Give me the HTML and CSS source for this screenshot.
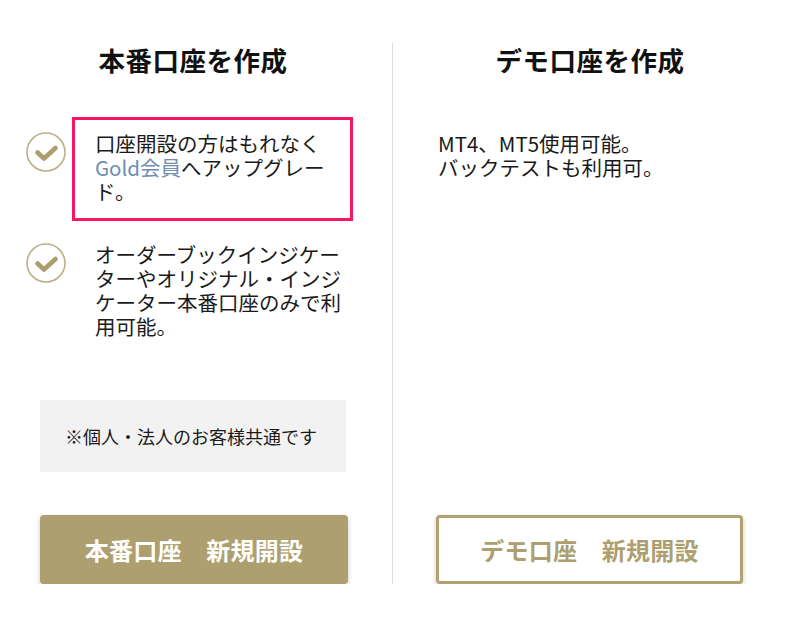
FILE: index.html
```html
<!DOCTYPE html>
<html lang="ja">
<head>
<meta charset="utf-8">
<title>口座を作成</title>
<link rel="stylesheet" href="styles.css">
</head>
<body>
<div class="wrap">
  <section class="col col-left">
    <h2 class="title">本番口座を作成</h2>
    <ul class="items">
      <li class="item">
        <svg class="check" viewBox="0 0 40 40" width="40" height="40"><circle cx="20" cy="20" r="19" fill="none" stroke="#bcae86" stroke-width="1.6"/><path d="M11.5 20.5 L18 26.5 L29.5 16" fill="none" stroke="#ab9d6c" stroke-width="4.6" stroke-linecap="round" stroke-linejoin="round"/></svg>
        <div class="box box-hl"><p class="txt">口座開設の方はもれなく<span class="gold">Gold会員</span>へアップグレード。</p></div>
      </li>
      <li class="item item2">
        <svg class="check" viewBox="0 0 40 40" width="40" height="40"><circle cx="20" cy="20" r="19" fill="none" stroke="#bcae86" stroke-width="1.6"/><path d="M11.5 20.5 L18 26.5 L29.5 16" fill="none" stroke="#ab9d6c" stroke-width="4.6" stroke-linecap="round" stroke-linejoin="round"/></svg>
        <div class="box"><p class="txt">オーダーブックインジケーターやオリジナル・インジケーター本番口座のみで利用可能。</p></div>
      </li>
    </ul>
    <div class="note">※個人・法人のお客様共通です</div>
    <a class="btn btn-fill" href="#">本番口座　新規開設</a>
  </section>
  <section class="col col-right">
    <h2 class="title">デモ口座を作成</h2>
    <p class="demo-txt">MT4、MT5使用可能。<br>バックテストも利用可。</p>
    <a class="btn btn-line" href="#">デモ口座　新規開設</a>
  </section>
</div>
</body>
</html>
```

FILE: styles.css
```css
* { box-sizing: border-box; }
html, body { margin: 0; padding: 0; background: #fff; }
body {
  font-family: "Noto Sans CJK JP", "Noto Sans", sans-serif;
  color: #1a1a1a;
}
.wrap {
  display: flex;
  padding-top: 43px;
  width: 785px;
}
.col {
  display: flex;
  flex-direction: column;
  width: 393px;
}
.col-left {
  padding: 0 46px 0 40px;
  border-right: 1px solid #dcdcdc;
}
.col-right {
  width: 392px;
  padding: 0 41px 0 43px;
}
.title {
  margin: 0 0 40px;
  font-size: 26.5px;
  line-height: 34px;
  font-weight: 700;
  text-align: center;
  color: #111;
  letter-spacing: 0.5px;
}
.items {
  list-style: none;
  margin: 0 -1px 0 -14px;
  padding: 0;
}
.item {
  display: flex;
  align-items: flex-start;
  gap: 6px;
}
.item2 { margin-top: 7px; }
.check {
  flex: none;
  margin-top: 15px;
  display: block;
}
.box {
  flex: 1;
  border: 3px solid transparent;
  padding: 11px 0 15px 20px;
}
.box-hl { border-color: #fa1560; }
.txt {
  margin: 0;
  width: 255px;
  font-size: 20.5px;
  line-height: 24px;
  color: #1a1a1a;
}
.gold { color: #6f8db0; }
.note {
  margin-top: 44px;
  height: 72px;
  background: #f2f2f2;
  display: flex;
  align-items: center;
  padding-left: 25px;
  font-size: 18px;
  color: #1a1a1a;
}
.btn {
  display: flex;
  align-items: center;
  justify-content: center;
  height: 69px;
  border-radius: 4px;
  text-decoration: none;
  font-size: 24px;
  font-weight: 700;
  letter-spacing: 0.3px;
  box-shadow: 0 2px 5px rgba(0,0,0,0.22);
}
.btn-fill {
  margin-top: 43px;
  width: 308px;
  background: #ad9f6f;
  color: #fff;
}
.btn-line {
  margin-top: auto;
  width: 307px;
  background: #fff;
  border: 3px solid #b0a272;
  color: #ad9f6f;
}
.demo-txt {
  margin: 14px 0 0;
  padding-left: 2px;
  font-size: 20.5px;
  line-height: 24px;
  color: #1a1a1a;
}
```
